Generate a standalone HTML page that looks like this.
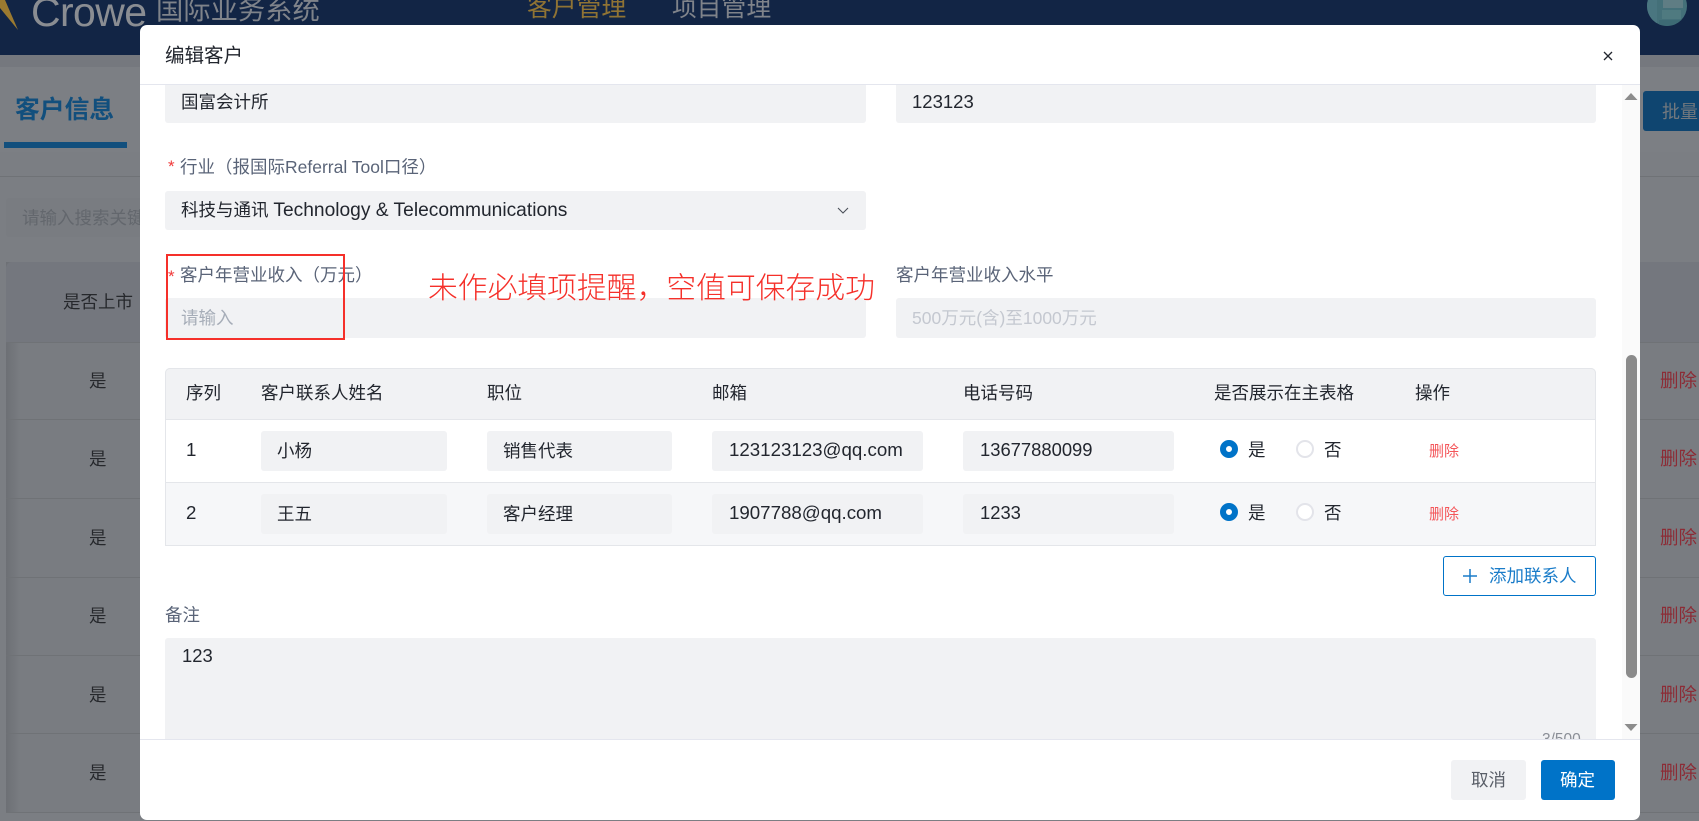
<!DOCTYPE html>
<html lang="zh">
<head>
<meta charset="utf-8">
<title>编辑客户</title>
<style>
html,body{margin:0;padding:0}
body{width:1699px;height:821px;overflow:hidden;position:relative;background:#7b7e83;font-family:"Liberation Sans","Noto Sans CJK SC",sans-serif;font-size:17.5px;color:#22262e}
div,span.a{position:absolute;box-sizing:border-box}
.t{white-space:nowrap;line-height:24px;height:24px}
.in{background:#f1f2f4;border-radius:3px}
.lab{color:#5a6478}
.star{color:#f03a3a}
.hl{height:1px;background:#6f7276}
.d{color:#8c2c36;font-size:18.5px}
.y{color:#26282c;font-size:17.5px}
.rd{width:18px;height:18px;border-radius:50%}
.on{background:#fff;border:6px solid #0073c8}
.off{background:#fff;border:2px solid #e3e4ea}
.l{font-size:18.7px}
</style>
</head>
<body>
<!-- top navigation -->
<div style="left:0;top:0;width:1699px;height:55px;background:#122545"></div>
<svg style="position:absolute;left:0;top:0" width="24" height="34"><path d="M0 8 L0 0 L5 0 L18 30 Z" fill="#9b7a30"/></svg>
<div class="t" style="left:31px;top:-13px;font-size:41px;line-height:50px;height:50px;color:#8a8d92;letter-spacing:-.6px">Crowe</div>
<div class="t" style="left:156px;top:-8px;font-size:27.3px;line-height:36px;height:36px;color:#7f838a">国际业务系统</div>
<div class="t" style="left:527px;top:-9px;font-size:24.8px;line-height:36px;height:36px;color:#8f7334">客户管理</div>
<div class="t" style="left:672px;top:-9px;font-size:24.8px;line-height:36px;height:36px;color:#7f838a">项目管理</div>
<svg style="position:absolute;left:1647px;top:0" width="40" height="27"><defs><clipPath id="av"><circle cx="20" cy="6" r="20"/></clipPath></defs><g clip-path="url(#av)"><rect width="40" height="27" fill="#447079"/><rect x="16" y="0" width="20" height="8" fill="#5f7d84"/><rect x="15" y="10" width="19" height="9" fill="#4f7a80"/><rect x="12" y="20" width="24" height="7" fill="#3d6a74"/><rect x="0" y="0" width="10" height="27" fill="#4a7680"/></g></svg>

<!-- page behind overlay -->
<div style="left:0;top:55px;width:1699px;height:12px;background:#75787e"></div>
<div style="left:0;top:67px;width:1699px;height:85px;background:#7c7f84"></div>
<div class="t" style="left:15px;top:95px;font-size:24.8px;line-height:32px;height:32px;font-weight:bold;color:#124f7d">客户信息</div>
<div style="left:4px;top:142px;width:123px;height:6px;background:#124f7d"></div>
<div style="left:0;top:176px;width:1699px;height:1px;background:#6f7276"></div>
<div style="left:6px;top:198px;width:150px;height:39px;background:#797c81;border-radius:3px"></div>
<div class="t" style="left:22px;top:206px;color:#63676d;font-size:17.5px">请输入搜索关键字</div>
<div style="left:1643px;top:91px;width:70px;height:40px;background:#0f4570;border-radius:3px"></div>
<div class="t" style="left:1662px;top:100px;color:#72787e;font-size:18px">批量导</div>

<div style="left:6px;top:262px;width:1693px;height:550px;background:#797c81;border-radius:6px 0 0 0"></div>
<div style="left:6px;top:262px;width:14px;height:550px;background:linear-gradient(90deg,#6d7075,#797c81)"></div>
<div style="left:6px;top:262px;width:1693px;height:80px;background:#74777e;border-radius:6px 0 0 0"></div>
<div class="hl" style="left:6px;top:342px;width:1693px"></div>
<div class="hl" style="left:6px;top:419px;width:1693px"></div>
<div class="hl" style="left:6px;top:498px;width:1693px"></div>
<div class="hl" style="left:6px;top:577px;width:1693px"></div>
<div class="hl" style="left:6px;top:655px;width:1693px"></div>
<div class="hl" style="left:6px;top:733px;width:1693px"></div>
<div class="hl" style="left:6px;top:812px;width:1693px"></div>
<div class="t y" style="left:63px;top:290px">是否上市</div>
<div class="t y" style="left:89px;top:369px">是</div>
<div class="t y" style="left:89px;top:447px">是</div>
<div class="t y" style="left:89px;top:526px">是</div>
<div class="t y" style="left:89px;top:604px">是</div>
<div class="t y" style="left:89px;top:683px">是</div>
<div class="t y" style="left:89px;top:761px">是</div>
<div class="t d" style="left:1660px;top:369px">删除</div>
<div class="t d" style="left:1660px;top:447px">删除</div>
<div class="t d" style="left:1660px;top:526px">删除</div>
<div class="t d" style="left:1660px;top:604px">删除</div>
<div class="t d" style="left:1660px;top:683px">删除</div>
<div class="t d" style="left:1660px;top:761px">删除</div>

<!-- modal -->
<div style="left:140px;top:25px;width:1500px;height:795px;background:#fff;border-radius:7px;overflow:hidden">
  <div style="left:0;top:714px;width:1500px;height:1px;background:#e4e6ee;z-index:5"></div>
  <div style="left:0;top:59px;width:1500px;height:1px;background:#e4e6ee;z-index:5"></div>
  <div style="left:1482px;top:60px;width:18px;height:654px;background:#fafafa"></div>
</div>
<div class="t" style="left:165px;top:44px;font-size:19.5px;color:#22262e">编辑客户</div>
<svg style="position:absolute;left:1601px;top:49px" width="14" height="14"><path d="M3 3 L11 11 M11 3 L3 11" stroke="#22262e" stroke-width="1.3" fill="none"/></svg>

<!-- scrollable area clip -->
<div style="left:140px;top:85px;width:1482px;height:654px;overflow:hidden">
  <div class="in" style="left:25px;top:-20px;width:701px;height:58px"></div>
  <div class="in" style="left:756px;top:-20px;width:700px;height:58px"></div>
  <div class="t" style="left:41px;top:5px">国富会计所</div>
  <div class="t l" style="left:772px;top:5px;font-size:18.5px">123123</div>

  <div class="t star" style="left:28px;top:70px;font-size:17px">*</div>
  <div class="t lab" style="left:40px;top:70px">行业（报国际Referral Tool口径）</div>
  <div class="in" style="left:25px;top:106px;width:701px;height:39px"></div>
  <div class="t" style="left:41px;top:113px">科技与通讯 <span style="font-size:19.200px">Technology &amp; Telecommunications</span></div>
  <svg style="position:absolute;left:696px;top:120px" width="14" height="12"><path d="M2 3 L7 8 L12 3" stroke="#4a4f58" stroke-width="1.1" fill="none"/></svg>

  <div class="t star" style="left:28px;top:180px;font-size:17px">*</div>
  <div class="t lab" style="left:40px;top:178px">客户年营业收入（万元）</div>
  <div class="in" style="left:25px;top:213px;width:701px;height:40px"></div>
  <div class="t" style="left:41px;top:221px;color:#a6adb8">请输入</div>

  <div class="t lab" style="left:756px;top:178px">客户年营业收入水平</div>
  <div class="in" style="left:756px;top:213px;width:700px;height:40px"></div>
  <div class="t" style="left:772px;top:221px;color:#c4c8d0">500万元(含)至1000万元</div>

  <!-- table -->
  <div style="left:25px;top:283px;width:1431px;height:178px;border:1px solid #e4e6ea;border-radius:5px 5px 0 0;background:#fff"></div>
  <div style="left:25px;top:283px;width:1431px;height:52px;background:#f1f2f4;border:1px solid #e4e6ea;border-radius:5px 5px 0 0"></div>
  <div style="left:26px;top:397px;width:1429px;height:63px;background:#f6f7f9;border-top:1px solid #e4e6ea"></div>
  <div class="t" style="left:46px;top:296px">序列</div>
  <div class="t" style="left:121px;top:296px">客户联系人姓名</div>
  <div class="t" style="left:347px;top:296px">职位</div>
  <div class="t" style="left:572px;top:296px">邮箱</div>
  <div class="t" style="left:823px;top:296px">电话号码</div>
  <div class="t" style="left:1074px;top:296px">是否展示在主表格</div>
  <div class="t" style="left:1275px;top:296px">操作</div>

  <div class="t l" style="left:46px;top:353px">1</div>
  <div class="in" style="left:121px;top:346px;width:186px;height:40px"></div>
  <div class="t" style="left:137px;top:354px">小杨</div>
  <div class="in" style="left:347px;top:346px;width:185px;height:40px"></div>
  <div class="t" style="left:363px;top:354px">销售代表</div>
  <div class="in" style="left:572px;top:346px;width:211px;height:40px"></div>
  <div class="t l" style="left:589px;top:353px">123123123@qq.com</div>
  <div class="in" style="left:823px;top:346px;width:211px;height:40px"></div>
  <div class="t" style="left:840px;top:353px;font-size:18.400px">13677880099</div>
  <div class="rd on" style="left:1080px;top:355px"></div>
  <div class="t" style="left:1108px;top:353px">是</div>
  <div class="rd off" style="left:1156px;top:355px"></div>
  <div class="t" style="left:1184px;top:353px">否</div>
  <div class="t" style="left:1289px;top:355px;font-size:15px;color:#f4565a">删除</div>

  <div class="t l" style="left:46px;top:416px">2</div>
  <div class="in" style="left:121px;top:409px;width:186px;height:40px"></div>
  <div class="t" style="left:137px;top:417px">王五</div>
  <div class="in" style="left:347px;top:409px;width:185px;height:40px"></div>
  <div class="t" style="left:363px;top:417px">客户经理</div>
  <div class="in" style="left:572px;top:409px;width:211px;height:40px"></div>
  <div class="t l" style="left:589px;top:416px">1907788@qq.com</div>
  <div class="in" style="left:823px;top:409px;width:211px;height:40px"></div>
  <div class="t" style="left:840px;top:416px;font-size:18.400px">1233</div>
  <div class="rd on" style="left:1080px;top:418px"></div>
  <div class="t" style="left:1108px;top:416px">是</div>
  <div class="rd off" style="left:1156px;top:418px"></div>
  <div class="t" style="left:1184px;top:416px">否</div>
  <div class="t" style="left:1289px;top:418px;font-size:15px;color:#f4565a">删除</div>

  <!-- add button -->
  <div style="left:1303px;top:471px;width:153px;height:40px;border:1px solid #0073c8;border-radius:3px;background:#fff"></div>
  <svg style="position:absolute;left:1322px;top:483px" width="16" height="16"><path d="M8 1 V15 M1 8 H15" stroke="#1a7cc9" stroke-width="1.5" fill="none"/></svg>
  <div class="t" style="left:1349px;top:479px;color:#1a7cc9">添加联系人</div>

  <div class="t lab" style="left:25px;top:518px">备注</div>
  <div class="in" style="left:25px;top:553px;width:1431px;height:110px"></div>
  <div class="t" style="left:42px;top:559px;font-size:18.400px">123</div>
  <div class="t" style="left:1402px;top:643px;font-size:15.500px;color:#8a8e96">3/500</div>
</div>

<!-- scrollbar -->
<svg style="position:absolute;left:1622px;top:90px" width="18" height="12"><path d="M2.500 10 L9 3 L15.500 10Z" fill="#8c8c8c"/></svg>
<div style="left:1626px;top:355px;width:11px;height:323px;background:#8b8b8b;border-radius:6px"></div>
<svg style="position:absolute;left:1622px;top:722px" width="18" height="12"><path d="M2.500 2 L15.500 2 L9 9Z" fill="#8c8c8c"/></svg>

<!-- footer -->
<div style="left:1451px;top:760px;width:75px;height:40px;background:#f1f2f4;border-radius:3px"></div>
<div class="t" style="left:1471px;top:768px;color:#5a5f68;text-align:left">取消</div>
<div style="left:1541px;top:760px;width:74px;height:40px;background:#0073c8;border-radius:3px"></div>
<div class="t" style="left:1560px;top:768px;color:#fff">确定</div>

<!-- annotation -->
<div style="left:166px;top:254px;width:179px;height:86px;border:2px solid #f5302a"></div>
<div class="t" style="left:428px;top:270px;font-size:29.8px;line-height:38px;height:38px;color:#f5302a;font-weight:300;z-index:9">未作必填项提醒，空值可保存成功</div>
</body>
</html>
